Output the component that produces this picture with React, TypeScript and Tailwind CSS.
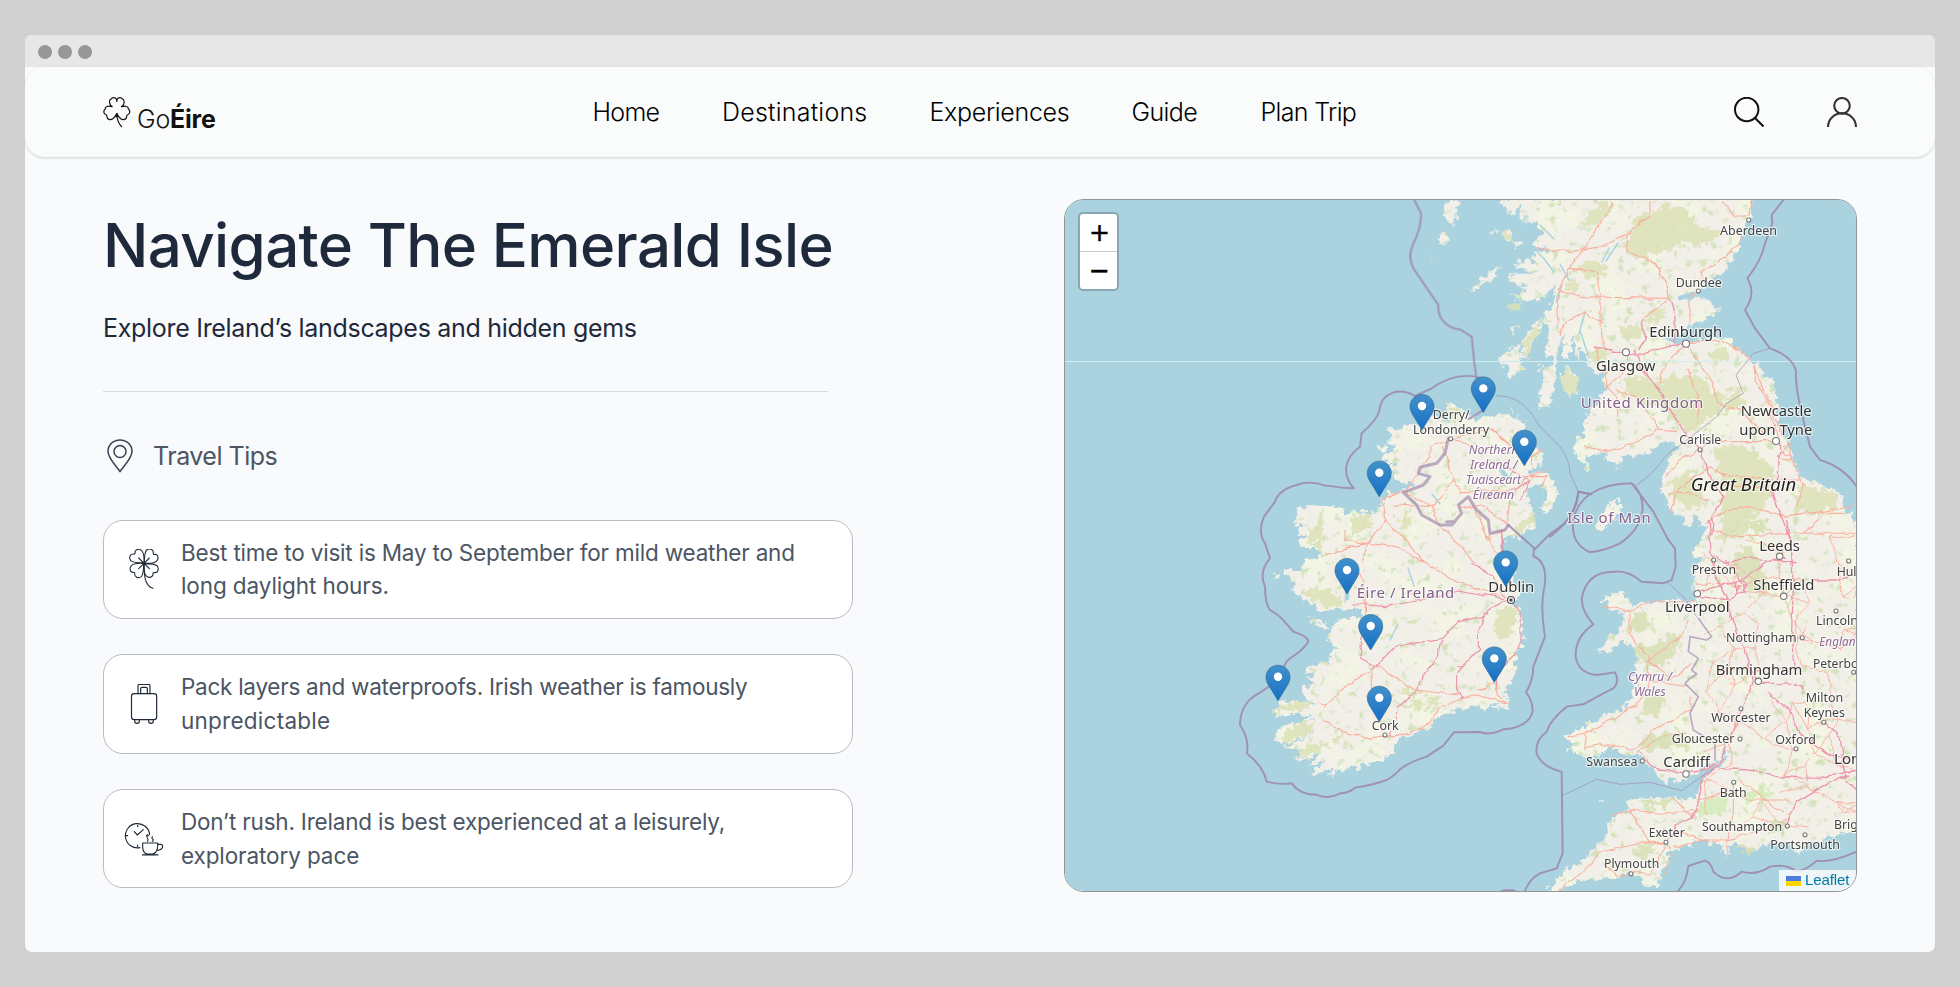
import React from "react";

type Label = {
  text: string;
  x: number;
  y: number;
  width: number;
  kind: "town" | "city" | "region" | "subregion" | "island";
};

const labels: Label[] = [
  { text: "Aberdeen", x: 1720, y: 234.7, width: 57, kind: "town" },
  { text: "Dundee", x: 1675.7, y: 286.7, width: 46, kind: "town" },
  { text: "Edinburgh", x: 1649.3, y: 337.3, width: 73, kind: "city" },
  { text: "Glasgow", x: 1596, y: 370.7, width: 59.5, kind: "city" },
  { text: "United Kingdom", x: 1580.7, y: 408.3, width: 122.7, kind: "region" },
  { text: "Newcastle", x: 1740.7, y: 416, width: 71, kind: "city" },
  { text: "upon Tyne", x: 1739.3, y: 435, width: 73, kind: "city" },
  { text: "Carlisle", x: 1679.3, y: 444.3, width: 42, kind: "town" },
  { text: "Great Britain", x: 1690.7, y: 490.7, width: 105.5, kind: "island" },
  { text: "Isle of Man", x: 1567.3, y: 523.3, width: 83.5, kind: "region" },
  { text: "Northern", x: 1468.7, y: 454, width: 50, kind: "subregion" },
  { text: "Ireland /", x: 1470, y: 468.7, width: 47.5, kind: "subregion" },
  { text: "Tuaisceart", x: 1465.7, y: 483.7, width: 55.5, kind: "subregion" },
  { text: "Éireann", x: 1472.7, y: 498.7, width: 41.5, kind: "subregion" },
  { text: "Derry/", x: 1432.7, y: 419.3, width: 37, kind: "town" },
  { text: "Londonderry", x: 1413, y: 434.3, width: 76, kind: "town" },
  { text: "Éire / Ireland", x: 1356.7, y: 598.3, width: 97.5, kind: "region" },
  { text: "Dublin", x: 1488.3, y: 592, width: 46, kind: "city" },
  { text: "Cork", x: 1371.7, y: 730, width: 27, kind: "town" },
  { text: "Leeds", x: 1759.3, y: 550.7, width: 40.5, kind: "city" },
  { text: "Preston", x: 1691.7, y: 574, width: 44.5, kind: "town" },
  { text: "Sheffield", x: 1753.3, y: 590, width: 61, kind: "city" },
  { text: "Liverpool", x: 1665, y: 612, width: 64.5, kind: "city" },
  { text: "Hull", x: 1836.7, y: 575.7, width: 23, kind: "town" },
  { text: "Lincoln", x: 1816, y: 624.7, width: 42, kind: "town" },
  { text: "Nottingham", x: 1726, y: 641.7, width: 70.7, kind: "town" },
  { text: "England", x: 1819.3, y: 646, width: 43, kind: "subregion" },
  { text: "Birmingham", x: 1715.7, y: 675.3, width: 86.7, kind: "city" },
  { text: "Peterborough", x: 1813, y: 668, width: 80, kind: "town" },
  { text: "Milton", x: 1805.7, y: 702.3, width: 37.5, kind: "town" },
  { text: "Keynes", x: 1803.7, y: 717.3, width: 41.3, kind: "town" },
  { text: "Worcester", x: 1711.3, y: 722, width: 59.3, kind: "town" },
  { text: "Gloucester", x: 1671.7, y: 743.3, width: 62.7, kind: "town" },
  { text: "Oxford", x: 1775.3, y: 743.7, width: 40.7, kind: "town" },
  { text: "Swansea", x: 1586.3, y: 766, width: 51.3, kind: "town" },
  { text: "Cardiff", x: 1663.3, y: 767.3, width: 46.7, kind: "city" },
  { text: "London", x: 1834, y: 764, width: 54, kind: "city" },
  { text: "Bath", x: 1719.7, y: 796.7, width: 27, kind: "town" },
  { text: "Brighton", x: 1834, y: 828.7, width: 51, kind: "town" },
  { text: "Southampton", x: 1702, y: 831, width: 80.3, kind: "town" },
  { text: "Portsmouth", x: 1770.3, y: 849, width: 69.7, kind: "town" },
  { text: "Exeter", x: 1648.7, y: 837, width: 36, kind: "town" },
  { text: "Plymouth", x: 1604, y: 868.3, width: 55.3, kind: "town" },
  { text: "Cymru /", x: 1628, y: 681, width: 44, kind: "subregion" },
  { text: "Wales", x: 1634, y: 696, width: 31.7, kind: "subregion" },
];

const labelClass: Record<Label["kind"], string> = {
  town: "fill-[#444] text-[12.8px]",
  city: "fill-[#333] text-[15.3px]",
  region: "fill-[#84608a] text-[15px]",
  subregion: "fill-[#8d6a97] text-[12.5px] italic",
  island: "fill-[#1c1c1c] text-[18px] italic",
};

// Each settlement is [x, y, radius].
const towns: [number, number, number][] = [
  [1748.7, 220, 2], [1698.3, 291, 2], [1686, 343.7, 3.5], [1626, 352.3, 3.5],
  [1776, 441, 3.5], [1700, 449.7, 2], [1450.7, 438.7, 2], [1385, 735, 2],
  [1779.7, 556.3, 3.2], [1713.7, 560, 2], [1697.3, 593.7, 3.2], [1783.7, 596.3, 3.2],
  [1836, 611, 2], [1802.3, 637.7, 2], [1758.3, 681.3, 3.2], [1853.7, 672.3, 2],
  [1823.7, 722.3, 2], [1741, 708.7, 2], [1740, 739, 2], [1796, 748.7, 2],
  [1642.3, 761, 2], [1686, 774, 3.2], [1733.7, 782.3, 2], [1787.3, 826, 2],
  [1805, 834.7, 2], [1666, 842.3, 2], [1631, 873.7, 2], [1848.7, 561, 2],
];

const pins: [number, number][] = [
  [1483.3, 411.7], [1422, 429.3], [1524.3, 465], [1379.3, 496], [1505.7, 585.7],
  [1347, 593.3], [1370.7, 649.3], [1494.3, 681.7], [1278, 700], [1379.3, 721],
];

// Junctions used to weave the dense English road network.
function roadMesh(): string[] {
  let seed = 29;
  const rnd = () => {
    seed = (seed * 16807) % 2147483647;
    return seed / 2147483647;
  };
  const nodes: [number, number][] = [];
  for (let row = 0; row < 12; row++) {
    for (let col = 0; col < 7; col++) {
      const x = 1712 + col * 25 + (rnd() - 0.5) * 20;
      const y = 545 + row * 25 + (rnd() - 0.5) * 20;
      if (y < 832) nodes.push([x, y]);
    }
  }
  const out: string[] = [];
  nodes.forEach(([x, y], i) => {
    nodes.slice(i + 1).forEach(([u, v]) => {
      const d = Math.hypot(u - x, v - y);
      if (d < 32 && rnd() > 0.2) {
        const mx = (x + u) / 2 + (rnd() - 0.5) * 9;
        const my = (y + v) / 2 + (rnd() - 0.5) * 9;
        out.push(`M${x.toFixed(1)},${y.toFixed(1)}Q${mx.toFixed(1)},${my.toFixed(1)} ${u.toFixed(1)},${v.toFixed(1)}`);
      }
    });
  });
  return out;
}
const mesh = roadMesh().join("");

const NW = "translate(1060 190) scale(.33333)";
const NE = "translate(1460 190) scale(.33333)";
const SW = "translate(1200 520) scale(.33333)";
const SE = "translate(1540 520) scale(.33333)";
const MID = "translate(1250 380) scale(.33333)";

function Land() {
  return (
    <>
      <g transform={MID}>
        <path d="M120,600L100,570 160,570 160,540 225,525 190,500 150,500 145,480 190,470 135,460 160,435 130,430 145,405 135,385 180,375 270,382 300,410 310,392 380,398 400,375 385,365 400,350 440,335 470,330 500,310 455,312 430,290 440,275 410,285 405,265 440,255 400,240 400,225 440,205 410,190 425,165 410,150 450,140 500,130 550,110 600,125 590,68 640,85 660,120 690,115 740,103 800,112 825,130 815,160 850,185 880,225 875,250 845,270 845,285 890,275 920,320 915,370 885,400 870,385 890,360 880,320 860,310 830,340 850,400 850,440 810,470 770,470 755,500 770,560 800,610 815,640 790,670 810,700 815,760 400,740 340,715 345,690 250,690 180,670 120,625 150,620Z" />
        <path d="M180,720l50,15 10,12 -30,-8Z M70,585l15,0 0,8Z M385,205l20,-4 4,8 -18,8Z M780,88l20,3 -10,6Z" />
      </g>
      <g transform={SW}>
        <path d="M500,200L945,160 940,260 975,350 945,410 945,470 915,510 925,560 880,558 850,570 830,555 780,570 710,590 690,620 650,640 585,665 585,690 545,720 470,740 430,745 380,772 400,745 325,768 375,720 325,740 360,700 285,728 315,690 255,682 350,640 245,672 225,655 240,625 340,590 300,580 220,587 240,545 350,548 310,530 305,505 345,490 320,480 350,460 310,455 380,420 410,390 385,350 410,300 450,295 490,290 480,265 350,270 330,230 275,185 315,165 310,120 400,100Z" />
        <path d="M325,293l30,8 25,20 -30,-10Z M360,308l18,12 -5,3Z" />
      </g>
      <g transform={NE}>
        <path d="M120,40L150,70 190,45 175,80 205,85 180,100 235,95 245,130 220,165 270,178 215,195 230,215 165,215 175,235 240,242 150,255 145,275 200,295 180,320 145,310 190,335 240,330 290,290 270,350 250,370 265,420 262,490 280,510 250,545 235,640 250,655 275,640 275,600 290,540 295,470 315,430 305,500 320,505 345,440 350,510 365,470 385,520 395,460 380,520 400,545 430,555 435,600 420,630 385,660 370,740 362,745 350,742 340,780 362,810 385,850 388,840 375,795 430,790 475,835 480,800 530,795 560,790 600,755 660,760 640,790 610,850 605,900 625,950 650,980 675,970 670,1005 685,1010 705,970 720,1000 740,1010 725,1060 1195,1060 1195,1000 1150,950 1140,910 1090,885 1020,860 1000,800 960,700 945,620 940,570 900,545 880,510 840,480 800,445 700,455 650,462 600,450 650,435 690,405 740,385 780,360 745,330 715,318 660,335 720,295 800,240 840,170 845,130 870,80 885,25 120,25Z" />
        <path d="M125,130l20,-12 12,12 -8,22 -22,-8Z M165,155l12,-5 2,20 -10,5Z M30,300l15,-18 40,-30 35,-20 -15,30 -50,25 -10,20Z M190,470l10,-40 30,-30 22,-15 -20,45 -30,75 -18,-10Z M155,415l20,-10 -10,25 -10,8Z M115,520l15,-30 45,-20 12,40 10,30 -40,12 -10,20 -5,-45Z M310,540l20,-8 20,25 5,50 -30,8 -20,-35Z M100,120l20,0 -10,6Z M235,540l12,-15 -4,25Z" />
        <path d="M405,1020l20,-50 30,-35 22,-15 0,50 -40,40 -20,12Z" />
      </g>
      <g transform={NW}>
        <path d="M1160,30l28,0 5,25 -10,50 -20,-8 -10,-40Z M1130,155l20,-30 15,15 -15,25Z M1115,195l8,5 -3,8Z" />
      </g>
      <g transform={SE}>
        <path d="M480,0L505,30 495,60 465,80 460,110 490,120 460,145 460,205 470,215 465,240 490,260 455,245 400,240 330,245 270,262 245,300 240,335 210,350 170,395 215,395 220,375 275,370 290,400 280,480 280,530 240,570 190,590 130,620 75,650 110,670 80,690 140,710 190,705 180,695 235,682 240,705 290,700 340,750 370,780 430,785 470,760 530,725 580,680 530,745 490,770 470,830 440,840 350,830 260,840 265,870 215,890 200,945 130,1020 80,1050 20,1112 50,1115 100,1085 190,1075 270,1060 300,1080 330,1103 352,1100 365,1050 388,1030 380,1010 420,980 480,960 540,980 565,1020 570,1000 560,975 600,970 640,1000 650,985 690,970 750,970 770,1005 790,980 880,945 955,935 955,0Z" />
        <path d="M185,245l20,-25 45,0 15,30 25,10 -30,20 -50,-10 0,-25Z M183,840l4,0 0,12 -4,0Z" />
      </g>
    </>
  );
}

function Greens() {
  return (
    <>
      <g transform={NE} fill="#dce2b6">
        <path d="M495,170l40,-90 80,-35 60,10 40,50 70,20 -40,40 -80,-10 -60,30 -60,20 -45,-10Z" />
        <path d="M370,75l60,-30 35,-12 -20,45 -50,30 -25,0Z M340,225l60,-15 45,20 0,25 -70,10Z M320,270l35,0 -10,35 -25,-5Z M480,415l40,-15 30,20 -10,30 -60,-5Z M550,380l50,-20 20,10 -60,35Z M395,475l35,-5 10,30 -40,25 -10,-25Z" />
        <path d="M490,570l60,-15 40,20 70,-15 80,0 20,50 40,10 -40,60 -50,45 -50,-10 -50,-60 -60,-20 -60,-20Z" />
        <path d="M740,480l50,-10 25,30 -50,25Z M820,590l40,0 -10,40 -40,30 -30,20Z M125,130l20,-12 12,12 -8,22 -22,-8Z M190,460l10,-20 48,-50 -20,45 -30,60 -12,-5Z M310,540l20,-8 20,25 5,50 -30,8 -20,-35Z M140,355l40,-15 5,10 -40,12Z" />
        <path d="M625,870l60,-25 40,60 0,50 -50,-10 -45,-30Z M765,775l60,-10 80,30 30,60 -20,100 -60,40 -60,0 -20,-60 25,-20 -30,-50Z M1005,910l40,-20 80,20 10,40 -60,20 -70,-5Z M780,980l60,0 30,50 -80,20Z" />
      </g>
      <g transform={MID} fill="#dce2b6">
        <path d="M175,440l40,-15 10,70 -45,0Z M300,420l40,-20 30,10 -20,45 -50,20Z M160,625l40,0 70,15 10,40 -60,0 -40,-25Z M785,450l20,-30 40,-15 0,30 -40,30Z M590,75l40,15 -20,25Z M455,400l30,10 -10,35 -25,0Z M740,690l30,-15 30,15 0,50 -50,20 -10,-30Z" />
      </g>
      <g transform={SW} fill="#dce2b6">
        <path d="M885,290l30,-20 25,15 0,60 -40,20 -20,-40Z M225,580l30,-35 90,8 -40,20Z M240,650l60,-40 50,-5 -20,30 -70,30Z M290,710l40,-45 50,5 -50,40Z M590,515l40,-15 30,15 -50,15Z M670,540l40,-5 10,20 -40,10Z M600,555l60,-8 10,15 -50,5Z M400,650l20,-10 0,30 -20,5Z" />
      </g>
      <g transform={SE} fill="#d7dfb4">
        <path d="M285,280l40,-15 0,60 -45,20 -15,-20Z M285,375l40,10 50,-35 50,-10 -20,60 -40,40 -70,-15Z M320,525l60,10 -30,60 -50,-10Z M310,650l60,-10 60,0 10,40 -70,10 -60,0Z M520,45l40,-25 30,20 -50,30Z M590,90l40,-10 30,50 30,80 -20,30 -30,-30 -30,-30 -30,-50Z M570,0l100,0 30,35 -50,0 -60,-20Z M300,845l90,-10 0,15 -60,15Z M290,970l50,-5 0,40 -40,15 -15,-20Z M570,975l70,10 -15,15Z" />
        <path d="M475,840l80,-10 0,40 -60,20 -30,-5Z M600,820l90,-15 0,25 -70,15Z" fill="#d2ebb8" />
        <path d="M700,895l40,10 -10,35 -40,0Z" fill="#c8e0ac" />
      </g>
    </>
  );
}

function Roads() {
  return (
    <g fill="none" strokeLinejoin="round">
      <g stroke="#f9af9e" strokeWidth="0.95">
        <g transform={NE} strokeWidth="3.4">
          <path d="M460,35L380,165 330,230 300,300 370,320 440,322 630,325M230,175l100,10 80,-10 90,-40 70,-60 0,-45M330,235l80,10 10,80 0,60 15,90 30,10M500,135l0,50 80,30 40,60 8,50M725,265l0,-20 60,-35 55,-50 5,-30M300,305l-10,60 10,60M790,35l30,40 50,0 5,-45M630,325l-80,60M690,400l0,-80 25,-15M660,460l120,-10 60,30 40,40 30,80 30,60 25,80M430,400l-60,-35 -50,30 -20,40M400,470l40,80 0,40 30,30 0,60M500,490l-10,60 -50,40M370,770l80,15 80,-30 60,-35 60,5M670,470l-50,50 -20,60M680,460l80,120 10,60M680,540l40,100 -10,60M470,600l60,20 60,80 10,20M720,780l-60,30 -40,50M720,780l30,-25 190,0M880,520l10,60 40,70 25,90M770,640l70,20 80,80M960,780l30,20 40,90 -20,60M780,850l150,20 90,0M750,930l-60,-20 -60,0M960,900l-180,-20M740,1000l60,-40 70,-10 110,30 200,-30M1030,1030l60,-60 60,0M800,860l-50,-30 -90,60 -30,80M970,770l20,-10 0,50 -40,-10 30,-30" />
        </g>
        <g transform={MID} strokeWidth="3.4">
          <path d="M600,180l-60,20 0,30 -40,50 -30,50 -75,30 10,60 -50,65 -20,60M230,525l120,-35 90,10 80,45 100,60 120,40M400,420l60,50 60,75M550,380l60,-80 -30,-100M600,175l60,20M605,300l30,35 140,-5M550,380l10,40 60,70 60,60M550,380l-120,-5M600,180l120,-35 50,40 60,70M720,140l60,60M770,440l10,-80 50,-70 60,-20M775,435l-80,-60 -60,10M840,290l50,0 -10,30M845,270l0,-40 30,-20M770,450l-60,20 -50,-110M690,360l80,-25M325,570l20,60 0,60M285,450l0,30 60,10M710,465l60,100M455,330l90,50" />
        </g>
        <g transform={SW} strokeWidth="3.4">
          <path d="M380,105l120,-35M530,440l-110,70 -45,55M370,600l70,40 80,15 110,-15 60,-30 30,-50 70,-25M535,440l110,70 130,15M515,455l5,80 30,100M350,545l30,10M780,540l50,-15 95,25M830,510l60,-20M887,490l5,35 30,25M770,440l20,0" />
        </g>
        <g transform={SE} strokeWidth="3.2">
          <path d="M190,255l80,20 60,-30 140,0M80,650l55,-10 150,-80 40,-60 0,-80M135,640l0,50M290,690l50,-60 110,-60 0,-40M325,420l100,-70 20,-50M325,420l70,60 60,-50M285,690l-100,-20 -50,10M290,700l70,-50 80,-10M270,280l0,60 60,80M220,890l50,-20 90,10 120,-10M270,870l60,100 50,0 30,-50M378,967l-60,0 -140,30 -50,60 -70,50M378,967l20,40 -30,60M273,1061l60,0 40,-80M273,1061l-40,10 -40,-40M400,980l90,-20 70,0 100,-30 80,-30M410,930l100,40M475,840l70,-20 100,20 100,0M560,1010l0,-50 20,-80 0,-90M600,780l130,100M395,830l60,60M320,480l120,20M510,30l90,20 130,-10 220,0M470,190l60,0 60,10" />
        </g>
        <path d={mesh} strokeWidth="0.9" />
      </g>
      <g stroke="#ed94aa">
        <g transform={NE} strokeWidth="4">
          <path d="M455,487l40,0 40,10 100,-30 40,-5M540,480l15,-35 -10,-55M630,325l15,55 0,80M525,480l20,60 50,60 50,80 30,50 50,60 30,80 35,50 -30,60 -5,60M960,750l-5,110 -20,40 30,80 30,80M400,475l60,5" />
        </g>
        <g transform={SW} strokeWidth="3.5">
          <path d="M455,255l45,0 55,5 110,-20 110,-30 110,20 30,10M500,260l-5,50 -15,70 5,35 50,25M515,450l70,-70 140,-25 50,-50 75,-15 15,-20 60,-30M725,360l-10,50 -60,80 -5,30 -60,40 0,40M850,290l-15,50 0,50 -65,70 0,50 15,30M820,130l60,40 35,65M905,40l5,60 20,80M935,240l25,40 0,100 -70,90 0,30M570,650l0,-20" />
        </g>
        <g transform={MID} strokeWidth="3.5">
          <path d="M770,260l70,40 -40,30 -30,0M840,300l-30,60M755,450l0,50 30,120" />
        </g>
        <g transform={SE} strokeWidth="4">
          <path d="M508,0l5,100 10,60 40,80 20,70 40,110 15,70 -20,50 -40,90 -40,100 -50,45 -15,80 -20,40 -45,20 0,30M300,700l50,50 80,5 60,-5 40,-20M530,745l100,5 80,20 120,5 120,-25M520,110l40,20 50,-15 110,10 50,0M470,215l80,-20 50,-10 80,-60 60,-10M740,0l15,100 5,100 -5,130 10,110M600,200l-30,40 -90,-10M655,490l50,0 80,5 0,30M680,520l70,50 30,70 80,60 60,20M740,915l30,-70 100,-60 60,-20M655,490l-30,-60M810,180l80,0 60,-15M900,700l20,80 30,30M560,120l40,60 20,40M860,610l40,40 10,60M590,190l15,-10 15,15 -10,25 -20,0Z" />
        </g>
      </g>
    </g>
  );
}

function Borders() {
  return (
    <g fill="none" stroke="#9d86ae" strokeOpacity=".85" strokeLinejoin="round" strokeLinecap="round">
      <g strokeWidth="5.8">
        <g transform={NW}>
          <path d="M1062,28L1083,70Q1084,110 1065,150Q1040,195 1060,235L1135,345C1132,390 1165,415 1200,418L1235,440 1243,520 1250,570 1270,660 1225,688" />
        </g>
        <g transform={MID}>
          <path d="M701,-5C650,-20 600,-15 545,25L495,48C450,22 395,35 388,90Q385,115 335,160L330,200C275,240 280,290 312,325C260,325 240,315 225,317Q180,300 140,315Q85,330 75,365L42,410Q22,455 45,490L60,535Q25,575 45,620 45,670 60,690 85,705 95,715L130,755" />
          <path d="M775,435L855,507 900,462 945,430Q980,390 985,335L1025,343" />
        </g>
        <g transform={SW}>
          <path d="M280,335Q325,350 325,365 310,390 270,415 250,430 245,470 210,500 160,530 120,560 120,615 150,660 140,700 190,738 200,785 240,795 275,790 300,825 350,824 380,840 420,820 445,820 465,803 520,795 560,780 580,770 600,748 630,725 680,710L730,677 762,637 840,636Q870,648 910,628 985,622 998,575 998,540 978,517 1000,480 1000,440L1035,350Q1022,270 1030,220 1050,130 1000,108L1002,88" />
          <path d="M905,1112Q930,1108 945,1112" />
        </g>
        <g transform={NE}>
          <path d="M970,30L935,75 937,100 915,160Q905,210 862,265 890,310 855,360L885,415 930,475Q1000,500 1008,545 1005,590 1030,690L1050,770 1080,810Q1150,830 1190,890" />
          <path d="M355,905L390,912Q440,880 515,880L580,965 625,1050M515,880Q550,910 548,960 540,1020 480,1060 440,1080 390,1087 330,1060 340,990 350,940 390,912M355,905Q350,980 270,1040" />
        </g>
        <g transform={SE}>
          <path d="M385,60L405,85 407,140 395,180 370,190 305,185Q265,150 220,155 140,155 125,235 125,275 160,313 105,350 107,410 115,460 170,465L225,457Q240,485 220,505L190,520 130,553 80,560Q30,600 20,635 -15,660 -10,700 5,740 65,755L68,1000 50,1045 0,1060Q-30,1075 -45,1112M415,1112Q440,1085 445,1038L495,1022Q515,1030 520,1055 560,1095 605,1055 650,1068 690,1040 740,1030 770,1055 800,1050 830,1022 870,1030 950,995" />
        </g>
      </g>
      <g strokeWidth="3" strokeOpacity=".65">
        <g transform={NE}>
          <path d="M110,617Q170,615 210,665L240,710 300,770Q330,810 330,850L355,905M530,885Q580,850 600,820 630,780 655,770L700,735 770,680 800,640 850,610 828,555 880,490 930,475" />
        </g>
        <g transform={SE}>
          <path d="M65,828L170,778 240,793 330,787 425,812 470,780 520,745M385,190L430,230 470,290" />
          <path strokeWidth="5" d="M475,295L500,330 515,350 500,360 450,350 445,395 475,415 455,450 470,462 450,475 435,490 475,530 450,580 460,630 525,670 525,720" />
        </g>
      </g>
      <g transform={MID} strokeWidth="9" strokeOpacity=".65">
        <path d="M595,175L585,220 560,250 510,262 505,280 540,290 520,315 460,338 500,375 515,405 570,435 605,435 635,400 625,375 655,350 680,390 715,420 720,460 765,450 775,435M590,425l20,0" />
      </g>
    </g>
  );
}

function MapCanvas() {
  return (
    <svg className="block h-full w-full" viewBox="1065 200 791 691" preserveAspectRatio="none">
      <defs>
        <filter id="coast" colorInterpolationFilters="sRGB" filterUnits="userSpaceOnUse" x="1060" y="190" width="810" height="710">
          <feTurbulence type="fractalNoise" baseFrequency="0.16" numOctaves="3" seed="4" result="noise" />
          <feDisplacementMap in="SourceGraphic" in2="noise" scale="12" xChannelSelector="R" yChannelSelector="G" result="rough" />
          <feTurbulence type="fractalNoise" baseFrequency="0.12" numOctaves="4" seed="9" result="fine" />
          <feColorMatrix in="fine" values="0 0 0 0 .83  0 0 0 0 .89  0 0 0 0 .74  0 0 6 0 -3.65" result="woods" />
          <feComposite in="woods" in2="rough" operator="in" result="clippedWoods" />
          <feTurbulence type="fractalNoise" baseFrequency="0.03" numOctaves="3" seed="21" result="broad" />
          <feColorMatrix in="broad" values="0 0 0 0 .957  0 0 0 0 .965  0 0 0 0 .89  3 0 0 0 -1.4" result="fields" />
          <feComposite in="fields" in2="rough" operator="in" result="clippedFields" />
          <feMerge>
            <feMergeNode in="rough" />
            <feMergeNode in="clippedFields" />
            <feMergeNode in="clippedWoods" />
          </feMerge>
        </filter>
        <filter id="patch" colorInterpolationFilters="sRGB" filterUnits="userSpaceOnUse" x="1060" y="190" width="810" height="710">
          <feTurbulence type="fractalNoise" baseFrequency="0.13" numOctaves="3" seed="12" result="noise" />
          <feDisplacementMap in="SourceGraphic" in2="noise" scale="18" xChannelSelector="R" yChannelSelector="G" />
        </filter>
        <filter id="wiggle" colorInterpolationFilters="sRGB" filterUnits="userSpaceOnUse" x="1060" y="190" width="810" height="710">
          <feTurbulence type="fractalNoise" baseFrequency="0.09" numOctaves="2" seed="7" result="noise" />
          <feDisplacementMap in="SourceGraphic" in2="noise" scale="6" xChannelSelector="R" yChannelSelector="G" />
        </filter>
        <linearGradient id="pin" x1="0" y1="0" x2="0" y2="1">
          <stop offset="0" stopColor="#4191ca" />
          <stop offset=".4" stopColor="#3284c8" />
          <stop offset="1" stopColor="#1470c6" />
        </linearGradient>
      </defs>
      <rect x="1060" y="190" width="810" height="710" fill="#aad3df" />
      <g filter="url(#coast)" fill="#f2efe9"><Land /></g>
      <g filter="url(#patch)" opacity=".85"><Greens /></g>
      <g fill="none" stroke="#aad3df" strokeWidth="1.4" strokeLinecap="round">
        <path d="M1531,245l14,15 9,12M1540,225l14,14M1562,285l-6,16M1602,262l7,-14M1585,312l-6,22M1518,462l-8,14M1432,494l8,10M1408,568l6,18M1390,640l8,-16M1618,243l-12,18M1560,264l9,16M1580,330l9,28M1300,620l22,-3M1347,588l-2,14" />
        <path strokeWidth="4.5" d="M1501,470l5,6M1680,298l13,-4M1347,592l0,6" />
      </g>
      <g filter="url(#wiggle)"><Roads /></g>
      <path d="M1060,361.5H1870" stroke="#cdeff4" strokeWidth="1" />
      <Borders />
      {towns.map(([x, y, r]) => (
        <circle key={`${x}-${y}`} cx={x} cy={y} r={r} fill="#fff" stroke="#777" strokeWidth="1.1" />
      ))}
      <circle cx="1511" cy="600" r="3.5" fill="#eee" stroke="#555" strokeWidth="1.1" />
      <circle cx="1511" cy="600" r="1.6" fill="#444" />
      {labels.map((l) => (
        <text
          key={l.text}
          x={l.x}
          y={l.y}
          textLength={l.width}
          lengthAdjust={l.kind === "region" ? "spacing" : "spacingAndGlyphs"}
          className={`font-['Noto_Sans',sans-serif] ${labelClass[l.kind]}`}
          stroke="#fff"
          strokeOpacity=".65"
          strokeWidth="2.4"
          strokeLinejoin="round"
          paintOrder="stroke"
        >
          {l.text}
        </text>
      ))}
      {pins.map(([x, y]) => (
        <g key={`${x}-${y}`} transform={`translate(${x - 12.5} ${y - 35.3})`}>
          <path
            d="M12.5,.5C5.8,.5 .5,5.8 .5,12.3C.5,15 1.3,17.3 2.5,19.5L12.5,36L22.5,19.5C23.7,17.3 24.5,15 24.5,12.3C24.5,5.8 19.2,.5 12.5,.5Z"
            fill="url(#pin)"
            stroke="#2e6c97"
            strokeOpacity=".75"
            strokeWidth=".9"
          />
          <circle cx="12.5" cy="12" r="4.2" fill="#fff" />
        </g>
      ))}
    </svg>
  );
}

const ink = {
  fill: "none",
  stroke: "currentColor",
  strokeLinecap: "round" as const,
  strokeLinejoin: "round" as const,
};

function ShamrockLogo() {
  return (
    <svg className="h-8 w-7 text-[#111]" viewBox="0 0 28 32" {...ink} strokeWidth="1.2">
      <path d="M13.8,4C12.8,1.2 9.3,.8 8,3.2C6,3.5 6,7.5 8,9.8C8.8,10.5 9.5,10.5 9,10.8C5,9.5 2,10.5 2.2,13C.3,14.5 .3,17.5 2.5,18.5C4,19 3.5,19 4,20.5C3.8,23.5 7.5,24.5 9.8,22.8C12,21 13.2,19 13.8,17.5C14.4,19 15.6,21 17.8,22.8C20,24.5 23.8,23.5 23.6,20.5C24,19 23.6,19 25,18.5C27.3,17.5 27.3,14.5 25.4,13C25.6,10.5 22.5,9.5 18.6,10.8C18.1,10.5 18.9,10.5 19.7,9.8C21.6,7.5 21.6,3.5 19.6,3.2C18.3,.8 14.8,1.2 13.8,4Z" />
      <path d="M13.8,18C14,24 15.5,27.5 18.5,30.5M13.8,4v1.5M13.8,17.5L12.8,20.5H14.8Z" />
    </svg>
  );
}

function SearchIcon() {
  return (
    <svg className="h-[30px] w-[30px] text-[#111]" viewBox="0 0 30 30" fill="none" stroke="currentColor" strokeWidth="2">
      <circle cx="12.7" cy="12.5" r="11.7" />
      <path d="M21 21l8.5 8.5" />
    </svg>
  );
}

function UserIcon() {
  return (
    <svg className="h-[30px] w-[30px] text-[#333]" viewBox="0 0 30 30" fill="none" stroke="currentColor" strokeWidth="2.1">
      <circle cx="15" cy="8.8" r="7.8" />
      <path d="M1.1 30v-.5a13.9 13.2 0 0 1 27.8 0v.5" />
    </svg>
  );
}

function PinIcon() {
  return (
    <svg className="h-[34px] w-[26px] text-[#374151]" viewBox="0 0 26 34" fill="none" stroke="currentColor" strokeWidth="1.5">
      <path d="M13,1C6.2,1 1,6 1,12.5C1,19 8,25.5 13,32.5C18,25.5 25,19 25,12.5C25,6 19.8,1 13,1Z" />
      <circle cx="13" cy="12.5" r="6" />
    </svg>
  );
}

function CloverIcon() {
  return (
    <svg className="h-10 w-10 shrink-0 text-[#1f2937]" viewBox="102 147 120 120" {...ink} strokeWidth="3.3">
      {[0, 90, 180, 270].map((a) => (
        <path
          key={a}
          transform={`rotate(${a} 162 190)`}
          d="M162,189C163,170 160,158 156,153C149,145 138,147 135,155C136,161 135,163 129,162C120,162 116,173 122,182C128,188 145,189 162,189M146,174L162,190"
        />
      ))}
      <path d="M162,190C162,225 164,258 189,265" />
    </svg>
  );
}

function SuitcaseIcon() {
  return (
    <svg className="h-10 w-10 shrink-0 text-[#1f2937]" viewBox="102 552 120 120" {...ink} strokeWidth="3.5">
      <rect x="124.5" y="581" width="75.5" height="78" rx="8" />
      <path d="M144,581V557Q144,553.5 148,553.5H176Q180,553.5 180,557V581M152,581V566Q152,562 156,562H168Q172,562 172,566V581" />
      <path d="M134,660v4q0,6 7,6t7,-6v-4M176,660v4q0,6 7,6t7,-6v-4" />
    </svg>
  );
}

function SlowPaceIcon() {
  return (
    <svg className="h-10 w-10 shrink-0 overflow-visible text-[#1f2937]" viewBox="102 956 120 120" {...ink} strokeWidth="3.4">
      <path d="M150,1042A36.5,36.5 0 1 1 179,1003" />
      <path d="M133,994L142,1004 160,988M143,975v4M143,1034v5M113,1006h-4M175,1006h-5" />
      <path d="M158,1028H203V1038C203,1052 195,1060 188,1061H172C163,1059 158,1050 158,1040ZM203,1032H212Q218,1032 218,1038Q217,1049 200,1050M157,1063.5H204" />
      <path d="M173,1003q-5,5 -1,10t1,10M187,1009q-3,4 1,7t-1,7" />
    </svg>
  );
}

const tips = [
  {
    Icon: CloverIcon,
    box: "h-[98.75px] mb-[35.25px]",
    lines: ["Best time to visit is May to September for mild weather and", "long daylight hours."],
    tracking: ["tracking-[-0.2px]", "tracking-[-0.1px]"],
  },
  {
    Icon: SuitcaseIcon,
    box: "h-[99.5px] mb-[35.5px]",
    lines: ["Pack layers and waterproofs. Irish weather is famously", "unpredictable"],
    tracking: ["tracking-[-0.27px]", "tracking-[0.25px]"],
  },
  {
    Icon: SlowPaceIcon,
    box: "h-[99px]",
    lines: ["Don’t rush. Ireland is best experienced at a leisurely,", "exploratory pace"],
    tracking: ["tracking-[-0.2px]", "tracking-[-0.1px]"],
  },
];

const links = [
  { text: "Home", box: "w-[67px] tracking-[-0.7px]" },
  { text: "Destinations", box: "w-[145px] tracking-[0.22px]" },
  { text: "Experiences", box: "w-[139.5px] tracking-[-0.32px]" },
  { text: "Guide", box: "w-[66.5px] tracking-[-0.6px]" },
  { text: "Plan Trip", box: "w-[98px] tracking-[-0.65px]" },
];

export default function App() {
  return (
    <div className="h-[987px] w-[1960px] overflow-hidden bg-[#d0d0d0] px-[25px] pt-[35px] font-['Inter',sans-serif]">
      <div className="flex h-[917px] w-[1910px] flex-col overflow-hidden rounded-[7px] bg-[#f9fafc]">
        <div className="flex h-8 shrink-0 items-center gap-[6.5px] bg-[#e7e7e7] pl-[13.3px] pt-[2px]">
          <span className="h-[13.5px] w-[13.5px] rounded-full bg-[#979798]" />
          <span className="h-[13.5px] w-[13.5px] rounded-full bg-[#979798]" />
          <span className="h-[13.5px] w-[13.5px] rounded-full bg-[#979798]" />
        </div>

        <header className="flex h-[90px] shrink-0 items-center rounded-[20px] bg-[#fafbfb] px-[78px] shadow-[0_1px_3px_rgba(0,0,0,0.16)]">
          <div className="flex h-[33px] w-[489.5px] items-start">
            <ShamrockLogo />
            <div className="ml-[6px] mt-[8px] whitespace-nowrap text-[25px] leading-[30px] tracking-[-0.2px] text-[#111]">
              <span className="font-light">Go</span>
              <span className="font-bold">Éire</span>
            </div>
          </div>
          <nav className="flex gap-[62.5px] pt-[2px] text-[25px] font-light text-black">
            {links.map((l) => (
              <a key={l.text} className={`${l.box} whitespace-nowrap`}>{l.text}</a>
            ))}
          </nav>
          <div className="ml-auto flex gap-[63px]">
            <SearchIcon />
            <UserIcon />
          </div>
        </header>

        <main className="flex justify-between px-[78px]">
          <section className="flex w-[750px] flex-col pt-[51px]">
            <h1 className="whitespace-nowrap text-[60px] font-medium leading-[75px] tracking-[-0.63px] text-[#1e293b]">
              Navigate The Emerald Isle
            </h1>
            <p className="mt-[26px] whitespace-nowrap text-[25px] leading-[38px] tracking-[-0.3px] text-[#1e293b]">
              Explore Ireland’s landscapes and hidden gems
            </p>
            <hr className="mt-[44px] w-[725px] border-[#d9dbde]" />
            <div className="mt-[46px] flex h-[36px] items-center gap-[20px] pl-[4px] text-[#4b5563]">
              <PinIcon />
              <h2 className="whitespace-nowrap text-[25px] leading-[36px] tracking-[-0.5px]">Travel Tips</h2>
            </div>
            <div className="mt-[46px] flex flex-col">
              {tips.map(({ Icon, box, lines, tracking }) => (
                <div
                  key={lines[0]}
                  className={`${box} flex items-center gap-[17px] rounded-[20px] border border-[#b9bcc3] bg-white pl-5 text-[22.5px] leading-[33.75px] text-[#4b5563]`}
                >
                  <Icon />
                  <p className="whitespace-nowrap">
                    {lines.map((line, i) => (
                      <span key={line} className={`block ${tracking[i]}`}>{line}</span>
                    ))}
                  </p>
                </div>
              ))}
            </div>
          </section>

          <section className="relative mt-[42px] h-[693px] w-[793px] overflow-hidden rounded-[20px] border border-[#8f9698]">
            <MapCanvas />
            <div className="absolute left-[13px] top-[12px] flex w-[41px] flex-col overflow-hidden rounded-[5px] border-2 border-[#87a8b3] bg-white text-center font-['DejaVu_Sans',sans-serif] text-[25px] text-black [-webkit-text-stroke:0.5px_black]">
              <button className="h-[38px] border-b border-[#ccc] pl-[2px] leading-[37px]">+</button>
              <button className="h-[37px] pl-[2px] leading-[36px]">−</button>
            </div>
            <div className="absolute bottom-0 right-0 flex h-[21px] w-[77px] items-center gap-[4px] bg-white/80 pl-[7px] font-['Liberation_Sans',sans-serif] text-[15px] text-[#0078a8]">
              <svg className="h-[10px] w-[15px]" viewBox="0 0 15 10">
                <path fill="#4c7be1" d="M0 0h15v5H0z" />
                <path fill="#ffd500" d="M0 5h15v5H0z" />
              </svg>
              <a className="tracking-[-0.1px]">Leaflet</a>
            </div>
          </section>
        </main>
      </div>
    </div>
  );
}
